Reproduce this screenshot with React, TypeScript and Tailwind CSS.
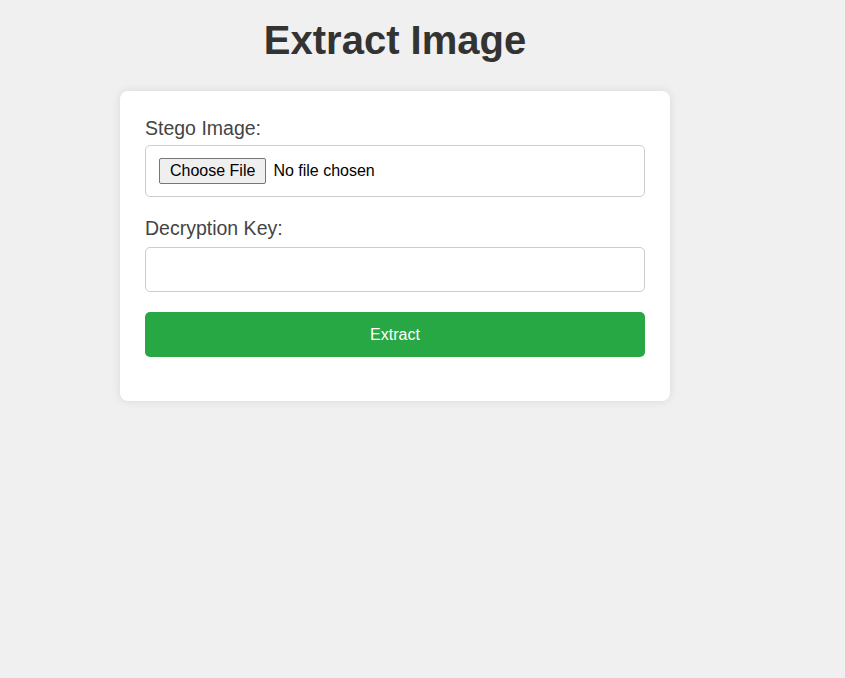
export default function App() {
  return (
    <div className="min-h-[678px] bg-[#f0f0f0] font-['Liberation_Sans',Arial,sans-serif]">
      <div className="flex justify-center pr-[55px]">
        <div className="w-[550px] pt-[17px]">
          <h1 className="text-center text-[40px] font-bold leading-[46px] text-[#333]">
            Extract Image
          </h1>

          <form
            className="mt-[28px] rounded-[8px] bg-white px-[25px] pt-[26px] pb-[44px] shadow-[0_0_10px_rgba(0,0,0,0.1)]"
            onSubmit={(e) => e.preventDefault()}
          >
            <label className="mb-[6px] block text-[19.5px] leading-[22px] text-[#444]">Stego Image:</label>
            <div className="flex h-[52px] items-center rounded-[5px] border border-[#ccc] px-[13px]">
              <span className="flex h-[26px] items-center rounded-[2px] border border-[#767676] bg-[#efefef] px-[10px] text-[16px] text-black">
                Choose File
              </span>
              <span className="ml-[7px] text-[16px] text-black">No file chosen</span>
            </div>

            <label className="mt-[20px] mb-[8px] block text-[19.5px] leading-[22px] text-[#444]">
              Decryption Key:
            </label>
            <input
              type="text"
              className="block h-[45px] w-full rounded-[5px] border border-[#ccc] px-[12px] text-[16px] outline-none"
            />

            <button
              type="submit"
              className="mt-[20px] flex h-[45px] w-full items-center justify-center rounded-[5px] bg-[#28a745] text-[16px] text-white"
            >
              Extract
            </button>
          </form>
        </div>
      </div>
    </div>
  );
}
